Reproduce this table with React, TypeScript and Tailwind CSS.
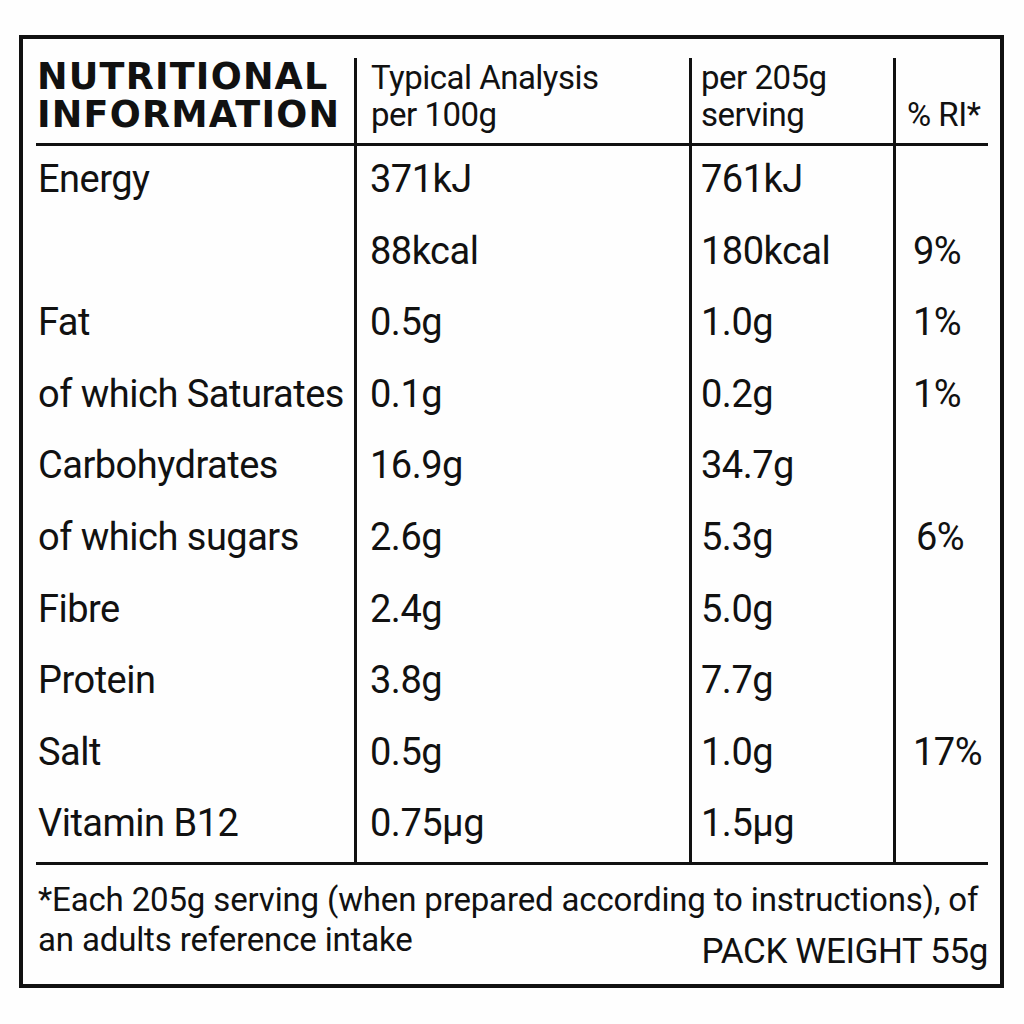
const rows: { label: string; per100: string; serving: string; ri: string; riShift?: boolean }[] = [
  { label: "Energy", per100: "371kJ", serving: "761kJ", ri: "" },
  { label: "", per100: "88kcal", serving: "180kcal", ri: "9%" },
  { label: "Fat", per100: "0.5g", serving: "1.0g", ri: "1%" },
  { label: "of which Saturates", per100: "0.1g", serving: "0.2g", ri: "1%" },
  { label: "Carbohydrates", per100: "16.9g", serving: "34.7g", ri: "" },
  { label: "of which sugars", per100: "2.6g", serving: "5.3g", ri: "6%", riShift: true },
  { label: "Fibre", per100: "2.4g", serving: "5.0g", ri: "" },
  { label: "Protein", per100: "3.8g", serving: "7.7g", ri: "" },
  { label: "Salt", per100: "0.5g", serving: "1.0g", ri: "17%" },
  { label: "Vitamin B12", per100: "0.75µg", serving: "1.5µg", ri: "" },
];

export default function App() {
  return (
    <div className="w-[1024px] h-[1024px] bg-[#fefefe] pt-[35px] pl-[19px] text-[#111] font-['Roboto','Liberation_Sans',sans-serif]">
      <div className="w-[985px] h-[953px] border-[4px] border-[#111] pt-[19px] pl-[13px] pr-[12px]">
        {/* header */}
        <div className="grid grid-cols-[318px_335px_204px_95px] h-[88px] border-b-[3px] border-[#111]">
          <div className="pl-[1px] font-['DejaVu_Sans',sans-serif] font-bold text-[36.5px] leading-[38px] tracking-[1.2px] whitespace-nowrap">
            NUTRITIONAL
            <br />
            INFORMATION
          </div>
          <div className="border-l-[3px] border-[#111] pl-[14px] pt-[1px] text-[33px] leading-[37px] tracking-[-0.5px]">
            Typical Analysis
            <br />
            per 100g
          </div>
          <div className="border-l-[3px] border-[#111] pl-[9px] pt-[1px] text-[33px] leading-[37px] tracking-[-0.5px]">
            per 205g
            <br />
            serving
          </div>
          <div className="border-l-[3px] border-[#111] pl-[11px] pt-[38px] text-[33px] leading-[37px] tracking-[-0.5px]">
            % RI*
          </div>
        </div>

        {/* body */}
        {rows.map((r, i) => (
          <div
            key={i}
            className="grid grid-cols-[318px_335px_204px_95px] h-[71.6px] text-[38px] leading-[66px] tracking-[-0.5px]"
          >
            <div className="pl-[2px] whitespace-nowrap">{r.label}</div>
            <div className="border-l-[3px] border-[#111] pl-[13px]">{r.per100}</div>
            <div className="border-l-[3px] border-[#111] pl-[9px]">{r.serving}</div>
            <div className={`border-l-[3px] border-[#111] ${r.riShift ? "pl-[20px]" : "pl-[17px]"}`}>{r.ri}</div>
          </div>
        ))}

        {/* footer */}
        <div className="border-t-[3px] border-[#111] pt-[15px]">
          <p className="pl-[2px] text-[33px] leading-[40px] tracking-[-0.15px] whitespace-nowrap">
            *Each 205g serving (when prepared according to instructions), of
          </p>
          <div className="flex justify-between items-start">
            <p className="pl-[2px] text-[33px] leading-[40px] tracking-[-0.15px]">an adults reference intake</p>
            <p className="mt-[12px] text-[35px] leading-[40px] tracking-[-0.4px]">PACK WEIGHT 55g</p>
          </div>
        </div>
      </div>
    </div>
  );
}
